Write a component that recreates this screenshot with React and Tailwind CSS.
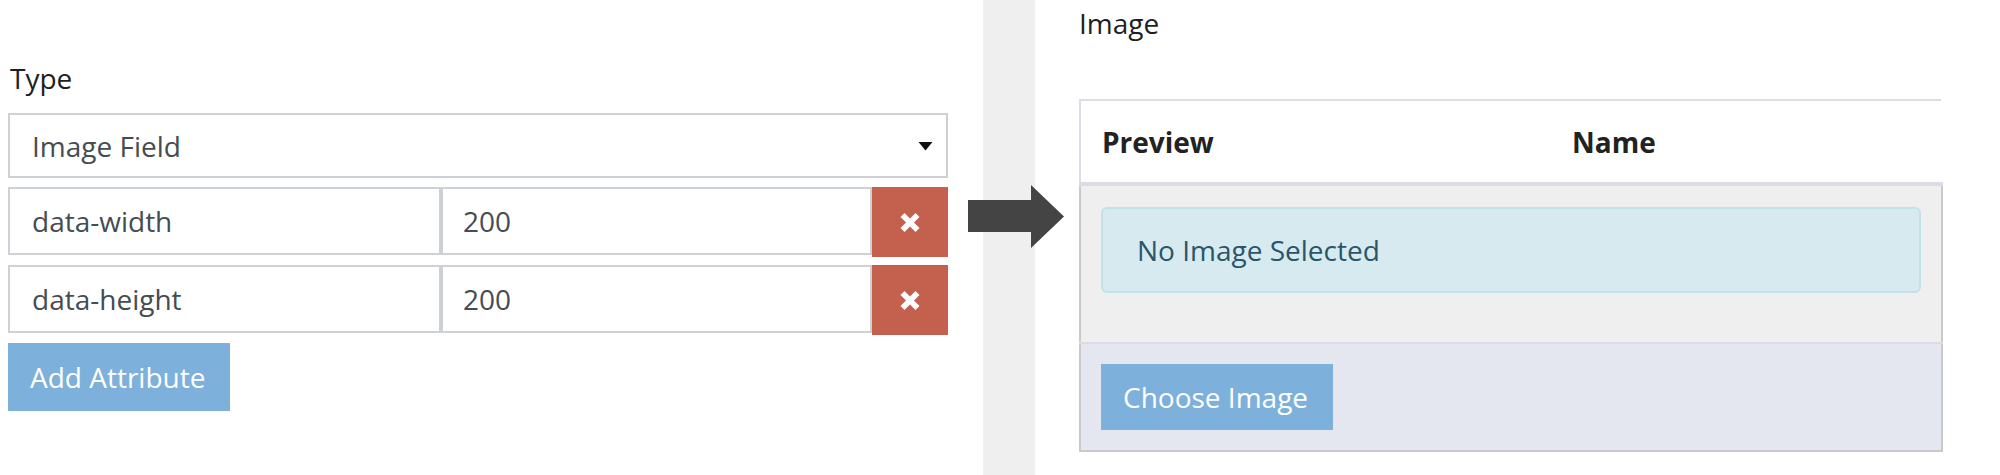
import React from "react";

function TimesIcon() {
  return (
    <svg width="22" height="21" viewBox="0 0 22 21" aria-hidden="true">
      <path d="M3.5 3 L18.5 18 M18.5 3 L3.5 18" stroke="#ffffff" strokeWidth="5.6" strokeLinecap="butt" fill="none" />
    </svg>
  );
}

function Caret() {
  return (
    <svg width="15" height="10" viewBox="0 0 15 10" aria-hidden="true">
      <path d="M0.5 1 H14.5 L7.5 9.5 Z" fill="#111111" />
    </svg>
  );
}

function AttrRow({ name, value }) {
  return (
    <div className="flex items-start">
      <div className="flex h-[68px] flex-1 items-center border-2 border-[#cdd1d6] pl-[22px] text-[#464c52]">
        {name}
      </div>
      <div className="flex h-[68px] flex-1 items-center border-2 border-[#cdd1d6] pl-[20px] text-[#464c52]">
        {value}
      </div>
      <div className="flex h-[70px] w-[76px] items-center justify-center bg-[#c4614e]">
        <TimesIcon />
      </div>
    </div>
  );
}

export default function App() {
  return (
    <div className="relative flex h-[475px] w-[2000px] overflow-hidden bg-white font-['Open_Sans','Liberation_Sans',sans-serif] text-[28px] leading-[40px]">
      {/* Left: form */}
      <div className="w-[983px] pl-[8px] pt-[58px]">
        <div className="w-[940px]">
          <div className="mb-[15px] pl-[2px] text-[#1f1f1f]">Type</div>
          <div className="flex h-[65px] items-center justify-between border-2 border-[#cdd1d6] pl-[22px] pr-[13px] text-[#464c52]">
            <span>Image Field</span>
            <Caret />
          </div>
          <div className="mt-[9px] flex flex-col gap-[8px]">
            <AttrRow name="data-width" value="200" />
            <AttrRow name="data-height" value="200" />
          </div>
          <div className="mt-[8px] flex h-[68px] w-[222px] items-center bg-[#7eb0dc] pl-[22px] text-white">
            Add Attribute
          </div>
        </div>
      </div>

      {/* Gray separator strip */}
      <div className="h-full w-[52px] bg-[#efefef]" />

      {/* Right: image widget */}
      <div className="flex-1 pl-[44px] pt-[3px]">
        <div className="text-[#1f1f1f]">Image</div>
        <div className="mt-[56px] w-[864px]">
          <div className="flex h-[83px] w-[862px] items-center border-l-2 border-t-2 border-[#dddde8] bg-white font-bold text-[#222]">
            <div className="w-[470px] pl-[21px]">Preview</div>
            <div className="pl-[21px]">Name</div>
          </div>
          <div className="h-[4px] w-[864px] bg-[#dcdce6]" />
          <div className="border-x-2 border-[#c9c9c9] bg-[#efefef] px-[20px] pb-[49px] pt-[21px]">
            <div className="flex h-[86px] items-center rounded-[6px] border-2 border-[#c2e2ea] bg-[#d6eaf0] pl-[34px] text-[#2a566a]">
              No Image Selected
            </div>
          </div>
          <div className="border-t-2 border-[#dcdce6]">
            <div className="border-x-2 border-b-2 border-[#c9c9c9] bg-[#e4e7f0] px-[20px] py-[20px]">
              <div className="flex h-[66px] w-[232px] items-center bg-[#7eb0dc] pl-[22px] text-white">
                Choose Image
              </div>
            </div>
          </div>
        </div>
      </div>

      {/* Arrow overlay */}
      <svg
        className="absolute left-[968px] top-[185px]"
        width="96"
        height="63"
        viewBox="0 0 96 63"
        aria-hidden="true"
      >
        <path d="M0 15 H63 V0 L96 31.5 L63 63 V47 H0 Z" fill="#444444" />
      </svg>
    </div>
  );
}
